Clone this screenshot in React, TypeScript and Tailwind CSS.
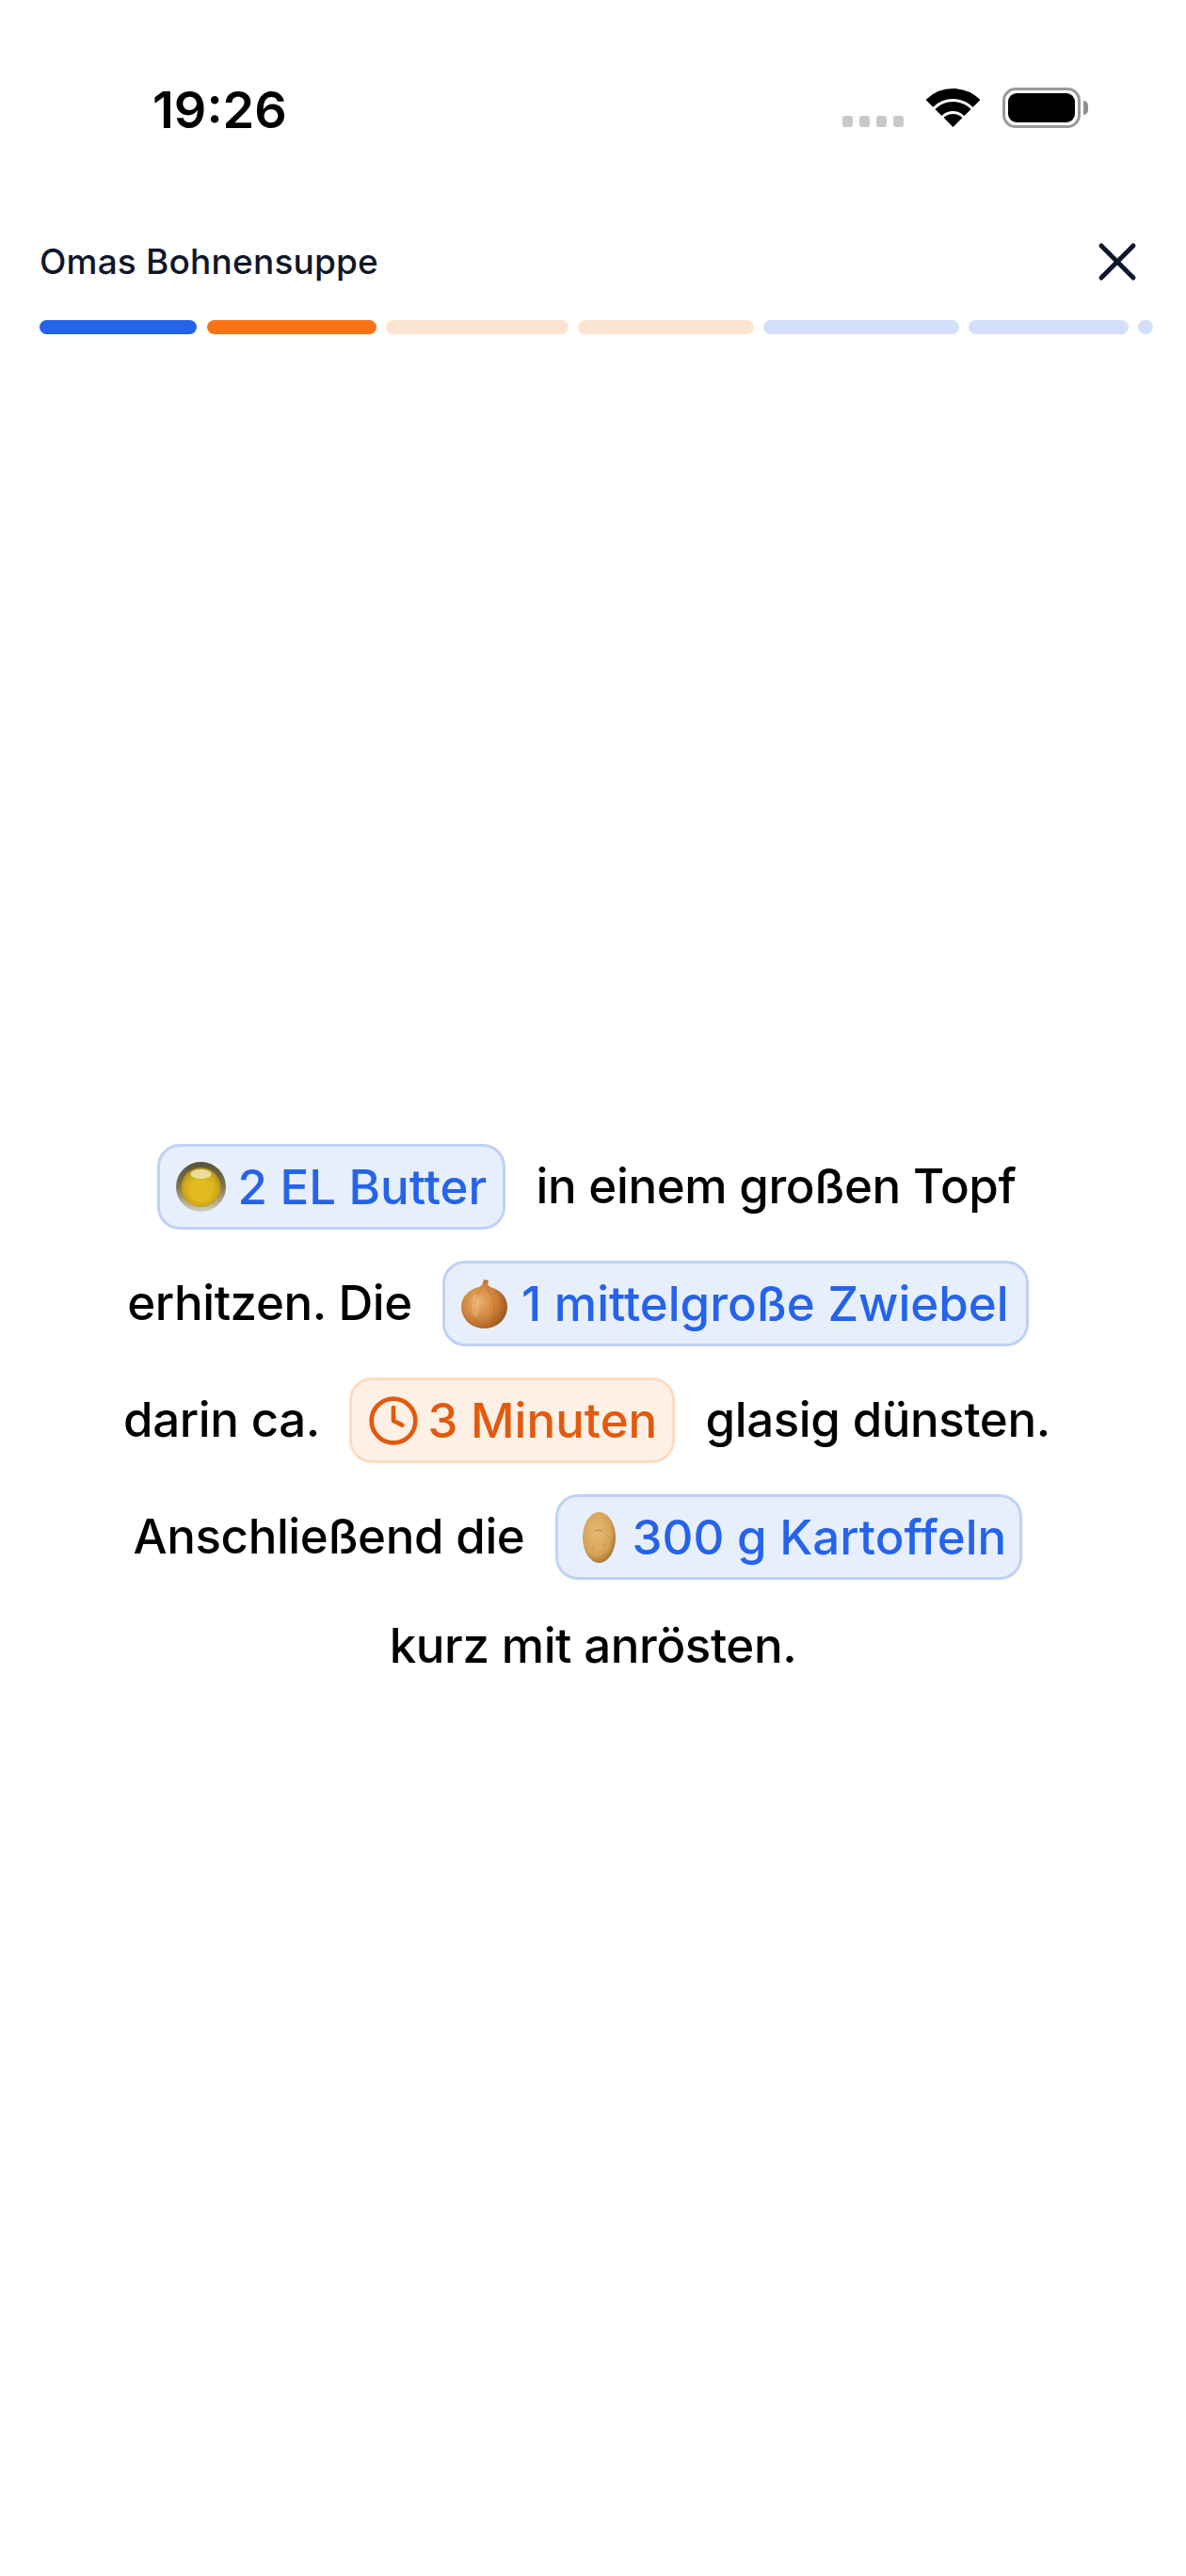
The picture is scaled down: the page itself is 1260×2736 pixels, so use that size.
import { Clock, X } from 'lucide-react'
import type { ReactNode } from 'react'

const segments = [
  { width: 'w-[167px]', color: 'bg-[#2563eb]' },
  { width: 'ml-[1px] w-[180px]', color: 'bg-[#f97316]' },
  { width: 'w-[194px]', color: 'bg-[#fde4d2]' },
  { width: 'w-[187px]', color: 'bg-[#fde4d2]' },
  { width: 'w-[208px]', color: 'bg-[#d3dffa]' },
  { width: 'w-[170px]', color: 'bg-[#d3dffa]' },
  { width: 'w-[16px]', color: 'bg-[#d3dffa]' },
]

function Wifi() {
  return (
    <svg width="57" height="42" viewBox="0 0 57 42" fill="none" stroke="black">
      <path d="M3.4 15.9A35.5 35.5 0 0 1 53.6 15.9" strokeWidth="11" />
      <path d="M12.94 25.44A22 22 0 0 1 44.06 25.44" strokeWidth="10" />
      <path d="M28.5 41L18.6 31.1A14 14 0 0 1 38.4 31.1Z" fill="black" stroke="none" />
    </svg>
  )
}

function OilIcon() {
  return (
    <svg width="53" height="53" viewBox="0 0 53 53" className="shrink-0">
      <defs>
        <linearGradient id="oilRim" x1="0" y1="0" x2="0" y2="1">
          <stop offset="0" stopColor="#56523f" />
          <stop offset="0.5" stopColor="#7f7648" />
          <stop offset="1" stopColor="#d2d0c2" />
        </linearGradient>
        <radialGradient id="oilFill" cx="0.5" cy="0.55" r="0.55">
          <stop offset="0" stopColor="#e0b81e" />
          <stop offset="0.7" stopColor="#d8ae1c" />
          <stop offset="1" stopColor="#ab8c18" />
        </radialGradient>
      </defs>
      <circle cx="26.5" cy="26.5" r="26.5" fill="url(#oilRim)" />
      <circle cx="26.5" cy="27" r="21" fill="url(#oilFill)" />
      <circle cx="26.5" cy="30" r="13" fill="#e4bd24" opacity="0.7" />
      <ellipse cx="26.5" cy="13" rx="11" ry="5" fill="#efe6b4" opacity="0.85" />
    </svg>
  )
}

function OnionIcon() {
  return (
    <svg width="49" height="52" viewBox="0 0 49 52" className="shrink-0">
      <defs>
        <radialGradient id="onionSkin" cx="0.38" cy="0.45" r="0.65">
          <stop offset="0" stopColor="#ecb070" />
          <stop offset="0.55" stopColor="#d0853a" />
          <stop offset="1" stopColor="#9a5520" />
        </radialGradient>
      </defs>
      <path d="M22 6L24 0L29 1L28 6C30 7 30 7 31 8C41 11 49 18 49 29C49 42 38 52 24.5 52C11 52 0 42 0 29C0 18 9 10 19 8C20 7 21 6 22 6Z" fill="url(#onionSkin)" />
      <path d="M22 9C13 18 11 38 20 51M27 9C36 18 38 38 30 51" fill="none" stroke="#a9601f" strokeWidth="1" opacity="0.4" />
      <ellipse cx="15" cy="28" rx="4" ry="12" fill="#f3c592" opacity="0.4" />
    </svg>
  )
}

function PotatoIcon() {
  return (
    <svg width="35" height="54" viewBox="0 0 35 54" className="shrink-0">
      <defs>
        <radialGradient id="potatoSkin" cx="0.42" cy="0.4" r="0.68">
          <stop offset="0" stopColor="#e6bb76" />
          <stop offset="0.65" stopColor="#d6a357" />
          <stop offset="1" stopColor="#94662a" />
        </radialGradient>
      </defs>
      <ellipse cx="17.5" cy="27" rx="17.5" ry="27" fill="url(#potatoSkin)" />
      <path d="M13 20q4 -2 7 0M22 35l2 1M10 38l1 1" fill="none" stroke="#a87a3a" strokeWidth="1" />
    </svg>
  )
}

function Pill({ icon, label, orange, className }: { icon: ReactNode; label: string; orange?: boolean; className: string }) {
  return (
    <span
      className={`mb-[20px] mr-[19px] mt-[13px] inline-flex h-[91px] items-center rounded-[24px] border-[3px] tracking-normal align-middle ${className} ${
        orange ? 'border-[#fbdcc2] bg-[#fff0e6] text-[#e25a0e]' : 'border-[#bfd2f5] bg-[#e7effd] text-[#2563eb]'
      }`}
    >
      {icon}
      <span>{label}</span>
    </span>
  )
}

export default function App() {
  return (
    <div className="min-h-[2736px] bg-white font-['Inter',sans-serif] text-black">
      <div className="flex items-start justify-between pl-[162px] pr-[104px] pt-[89px]">
        <div className="text-[54px] font-semibold leading-[56px]">19:26</div>
        <div className="flex items-end pt-[4px]">
          <div className="mb-[1px] mr-[24px] flex gap-[7px]">
            <div className="h-[12px] w-[11px] rounded-[3px] bg-[#c8c8c8]" />
            <div className="h-[12px] w-[11px] rounded-[3px] bg-[#c8c8c8]" />
            <div className="h-[12px] w-[11px] rounded-[3px] bg-[#c8c8c8]" />
            <div className="h-[12px] w-[11px] rounded-[3px] bg-[#c8c8c8]" />
          </div>
          <Wifi />
          <div className="ml-[24px] flex items-center">
            <div className="h-[43px] w-[83px] rounded-[14px] border-[3px] border-[#9a9a9a] p-[3px]">
              <div className="h-full w-full rounded-[9px] bg-black" />
            </div>
            <div className="ml-[3px] h-[15px] w-[5px] rounded-r-full bg-[#8f8f8f]" />
          </div>
        </div>
      </div>

      <div className="mt-[97px] flex h-[72px] items-center justify-between pl-[42px] pr-[39px]">
        <h1 className="text-[37px] font-[550] leading-[72px] tracking-[0.2px] text-[#0f172a]">Omas Bohnensuppe</h1>
        <X size={68} strokeWidth={1.75} color="#0f172a" />
      </div>

      <div className="mt-[26px] flex gap-[10px] pl-[42px]">
        {segments.map((s, i) => (
          <div key={i} className={`h-[15px] rounded-full ${s.width} ${s.color}`} />
        ))}
      </div>

      <p className="mt-[847px] px-[110px] text-center text-[51px] font-[450] leading-[100px] tracking-[-0.4px]">
        <Pill icon={<OilIcon />} label="2 EL Butter" className="gap-[12px] pl-[17px] pr-[17px]" /> in einem großen Topf{'\u00A0'} erhitzen. Die{' '}
        <Pill icon={<OnionIcon />} label="1 mittelgroße Zwiebel" className="ml-[19px] gap-[15px] pl-[17px] pr-[18px]" />
        {'\u00A0'} darin ca.{' '}
        <Pill icon={<Clock size={56} strokeWidth={2} className="shrink-0" />} label="3 Minuten" orange className="ml-[19px] gap-[8px] pl-[16px] pr-[16px]" /> glasig dünsten.{'\u00A0'} Anschließend die{' '}
        <Pill icon={<PotatoIcon />} label="300 g Kartoffeln" className="ml-[19px] gap-[18px] pl-[26px] pr-[14px]" />
        {'\u00A0'} kurz mit anrösten.
      </p>
    </div>
  )
}
